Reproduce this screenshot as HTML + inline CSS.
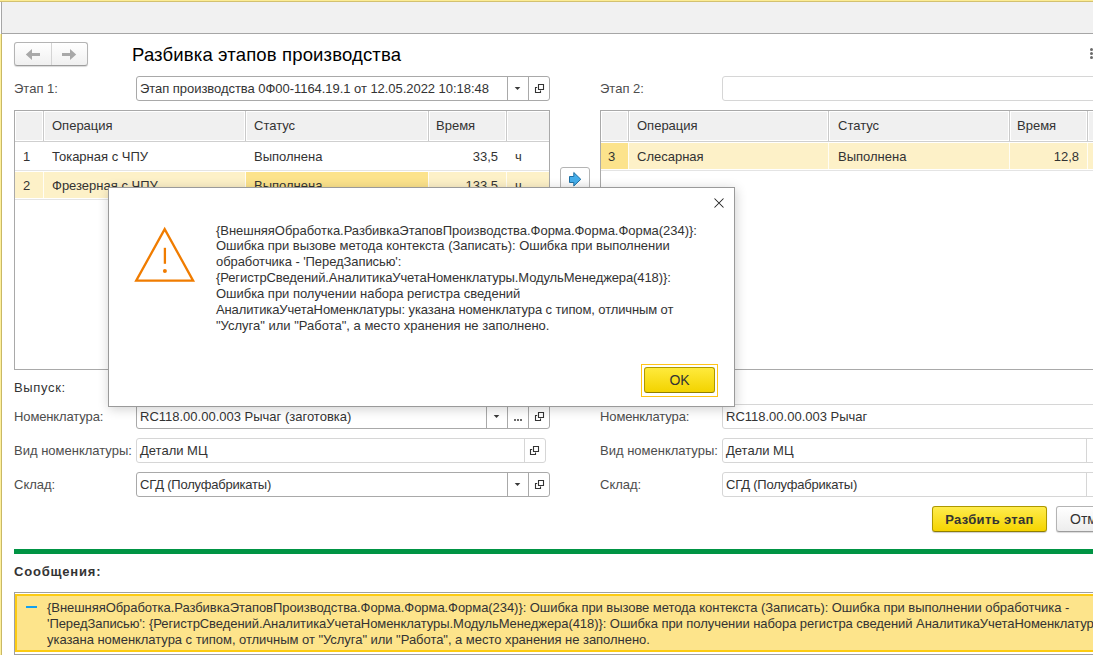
<!DOCTYPE html>
<html><head><meta charset="utf-8">
<style>
*{margin:0;padding:0;box-sizing:border-box}
html,body{width:1093px;height:655px;overflow:hidden;background:#fff}
body{position:relative;font-family:"Liberation Sans",sans-serif;font-size:13px;color:#333}
.a{position:absolute}
.t{position:absolute;white-space:pre;line-height:16px;padding-top:1px}
.lbl{color:#4d4d4d}
.fld{position:absolute;height:25px;border:1px solid #a9a9a9;border-radius:3px;background:#fff}
.fld.ro{border-color:#d6d6d6}
.dv{position:absolute;top:0;bottom:0;width:1px;background:#a9a9a9}
.ro .dv{background:#d6d6d6}
.tbl{position:absolute;border:1px solid #a9a9a9;background:#fff;overflow:hidden}
.hdr{position:absolute;left:0;right:0;top:0;height:30px;background:#f2f2f2;border-bottom:1px solid #d8d8d8}
.hd{position:absolute;top:0;height:30px;width:1px;background:#d8d8d8;border-right:1px solid #fafafa}
</style></head><body>

<!-- top frame -->
<div class="a" style="left:0;top:0;width:1093px;height:1px;background:#fcec94"></div>
<div class="a" style="left:0;top:1px;width:1093px;height:1px;background:#d3c170"></div>
<div class="a" style="left:2px;top:2px;width:1091px;height:31px;background:#f1f1f1"></div>
<div class="a" style="left:1px;top:2px;width:1px;height:32px;background:#a6a6a6"></div>
<div class="a" style="left:1px;top:33px;width:1092px;height:1px;background:#a6a6a6"></div>
<div class="a" style="left:0;top:34px;width:1px;height:621px;background:#fdf09c"></div>
<div class="a" style="left:1px;top:34px;width:1px;height:621px;background:#c9b866"></div>

<!-- nav buttons -->
<div class="a" style="left:14px;top:42px;width:74px;height:24px;border:1px solid #b4b4b4;border-bottom-color:#9c9c9c;border-radius:3px;background:linear-gradient(#fff,#f0f0f0);box-shadow:0 1px 1px rgba(0,0,0,.15)"></div>
<div class="a" style="left:51px;top:43px;width:1px;height:22px;background:#d4d4d4"></div>
<svg class="a" style="left:24px;top:47px" width="20" height="16" viewBox="0 0 20 16"><path d="M1.8 7.5 L8 1.9 V5.9 H16 V9 H8 V13.1 Z" fill="#a8a8a8"/></svg>
<svg class="a" style="left:58px;top:47px" width="20" height="16" viewBox="0 0 20 16"><path d="M18.2 7.5 L12 1.9 V5.9 H4 V9 H12 V13.1 Z" fill="#a8a8a8"/></svg>

<!-- title -->
<div class="t" style="left:132px;top:44px;font-size:18.5px;line-height:22px;color:#000;letter-spacing:0.15px;padding-top:0">Разбивка этапов производства</div>

<!-- more dots -->
<div class="a" style="left:1090px;top:48px;width:3px;height:3px;border-radius:50%;background:#6a6a6a"></div>
<div class="a" style="left:1090px;top:52px;width:3px;height:3px;border-radius:50%;background:#6a6a6a"></div>
<div class="a" style="left:1090px;top:56px;width:3px;height:3px;border-radius:50%;background:#6a6a6a"></div>


<!-- Etap 1 -->
<div class="t lbl" style="left:14px;top:80px">Этап 1:</div>
<div class="fld" style="left:136px;top:76px;width:414px">
  <div class="t" style="left:3px;top:3px;letter-spacing:-0.044px">Этап производства 0Ф00-1164.19.1 от 12.05.2022 10:18:48</div>
  <div class="dv" style="left:370px"></div>
  <div class="dv" style="left:391px"></div>
  <svg class="a" style="left:376px;top:9px" width="10" height="5"><path d="M1.7 0.9 H7.3 L4.5 3.9 Z" fill="#3a3a3a"/></svg>
  <svg class="a" style="left:397px;top:6px" width="12" height="12"><path d="M4.5 1.5 H9.5 V6.5 H4.5 Z M3.2 4.5 H1.5 V9.5 H6.5 V7.6" fill="none" stroke="#333" stroke-width="1.1"/></svg>
</div>

<!-- Etap 2 -->
<div class="t lbl" style="left:600px;top:80px">Этап 2:</div>
<div class="fld ro" style="left:722px;top:76px;width:400px"></div>

<!-- left table -->
<div class="a" style="left:14px;top:110px;width:536px;height:260px;overflow:hidden">
  <div class="a" style="left:0;top:0;width:536px;height:31px;background:#fff"></div>
  <div class="a" style="left:0;top:31px;width:536px;height:1px;background:#cfcfcf"></div>
  <div class="a" style="left:2px;top:2px;width:26px;height:28px;background:#f0f0f0"></div>
  <div class="a" style="left:31px;top:2px;width:199px;height:28px;background:#f0f0f0"></div>
  <div class="a" style="left:233px;top:2px;width:180px;height:28px;background:#f0f0f0"></div>
  <div class="a" style="left:416px;top:2px;width:75px;height:28px;background:#f0f0f0"></div>
  <div class="a" style="left:494px;top:2px;width:41px;height:28px;background:#f0f0f0"></div>
  <div class="a" style="left:29px;top:1px;width:1px;height:30px;background:#cacaca"></div>
  <div class="a" style="left:231px;top:1px;width:1px;height:30px;background:#cacaca"></div>
  <div class="a" style="left:414px;top:1px;width:1px;height:30px;background:#cacaca"></div>
  <div class="a" style="left:492px;top:1px;width:1px;height:30px;background:#cacaca"></div>
  <div class="t" style="left:38px;top:7px">Операция</div>
  <div class="t" style="left:240px;top:7px">Статус</div>
  <div class="t" style="left:422px;top:7px">Время</div>
  <!-- row1 -->
  <div class="a" style="left:0;top:60px;width:536px;height:1px;background:#e4e4e4"></div>
  <div class="t" style="left:9px;top:38px">1</div>
  <div class="t" style="left:38px;top:38px">Токарная с ЧПУ</div>
  <div class="t" style="left:240px;top:38px">Выполнена</div>
  <div class="t" style="right:52px;top:38px">33,5</div>
  <div class="t" style="left:501px;top:38px">ч</div>
  <!-- row2 -->
  <div class="a" style="left:0;top:62px;width:536px;height:26px;background:#fdf1c8"></div>
  <div class="a" style="left:29px;top:62px;width:1px;height:26px;background:#fffdf5"></div>
  <div class="a" style="left:231px;top:62px;width:1px;height:26px;background:#fffdf5"></div>
  <div class="a" style="left:232px;top:62px;width:182px;height:26px;background:#fce38c"></div>
  <div class="a" style="left:414px;top:62px;width:1px;height:26px;background:#fffdf5"></div>
  <div class="a" style="left:492px;top:62px;width:1px;height:26px;background:#fffdf5"></div>
  <div class="a" style="left:0;top:89px;width:536px;height:1px;background:#e4e4e4"></div>
  <div class="t" style="left:9px;top:67px">2</div>
  <div class="t" style="left:38px;top:67px">Фрезерная с ЧПУ</div>
  <div class="t" style="left:240px;top:67px">Выполнена</div>
  <div class="t" style="right:52px;top:67px">133,5</div>
  <div class="t" style="left:501px;top:67px">ч</div>
  <div class="a" style="left:0;top:0;width:536px;height:260px;border:1px solid #a9a9a9"></div>
</div>

<!-- arrow btn -->
<div class="a" style="left:560px;top:167px;width:30px;height:30px;border:1px solid #b4b4b4;border-radius:3px;background:linear-gradient(#fff 40%,#ececec)"></div>
<svg class="a" style="left:566px;top:170px" width="20" height="20" viewBox="0 0 20 20"><path d="M3.5 6.5 H7.8 V2.5 L14.8 9.3 L7.8 16 V12.5 H3.5 Z" fill="#45aeea" stroke="#1f6fa3" stroke-width="1" stroke-linejoin="round"/></svg>

<!-- right table -->
<div class="a" style="left:600px;top:110px;width:500px;height:260px;overflow:hidden">
  <div class="a" style="left:0;top:0;width:500px;height:31px;background:#fff"></div>
  <div class="a" style="left:0;top:31px;width:500px;height:1px;background:#cfcfcf"></div>
  <div class="a" style="left:2px;top:2px;width:25px;height:28px;background:#f0f0f0"></div>
  <div class="a" style="left:30px;top:2px;width:197px;height:28px;background:#f0f0f0"></div>
  <div class="a" style="left:230px;top:2px;width:178px;height:28px;background:#f0f0f0"></div>
  <div class="a" style="left:411px;top:2px;width:75px;height:28px;background:#f0f0f0"></div>
  <div class="a" style="left:489px;top:2px;width:10px;height:28px;background:#f0f0f0"></div>
  <div class="a" style="left:28px;top:1px;width:1px;height:30px;background:#cacaca"></div>
  <div class="a" style="left:228px;top:1px;width:1px;height:30px;background:#cacaca"></div>
  <div class="a" style="left:409px;top:1px;width:1px;height:30px;background:#cacaca"></div>
  <div class="a" style="left:487px;top:1px;width:1px;height:30px;background:#cacaca"></div>
  <div class="t" style="left:37px;top:7px">Операция</div>
  <div class="t" style="left:238px;top:7px">Статус</div>
  <div class="t" style="left:417px;top:7px">Время</div>
  <div class="a" style="left:0;top:33px;width:500px;height:26px;background:#fdf1c8"></div>
  <div class="a" style="left:0;top:33px;width:28px;height:26px;background:#fce38c"></div>
  <div class="a" style="left:28px;top:33px;width:1px;height:26px;background:#fffdf5"></div>
  <div class="a" style="left:228px;top:33px;width:1px;height:26px;background:#fffdf5"></div>
  <div class="a" style="left:409px;top:33px;width:1px;height:26px;background:#fffdf5"></div>
  <div class="a" style="left:487px;top:33px;width:1px;height:26px;background:#fffdf5"></div>
  <div class="a" style="left:0;top:60px;width:500px;height:1px;background:#e4e4e4"></div>
  <div class="t" style="left:8px;top:38px">3</div>
  <div class="t" style="left:37px;top:38px">Слесарная</div>
  <div class="t" style="left:238px;top:38px">Выполнена</div>
  <div class="t" style="right:21px;top:38px">12,8</div>
  <div class="a" style="left:0;top:0;width:520px;height:260px;border:1px solid #a9a9a9"></div>
</div>

<!-- bottom fields -->
<div class="t" style="left:14px;top:379px;color:#333;letter-spacing:0.65px">Выпуск:</div>
<div class="t lbl" style="left:14px;top:408px;letter-spacing:-0.12px">Номенклатура:</div>
<div class="fld" style="left:136px;top:404px;width:414px">
  <div class="t" style="left:3px;top:3px">RC118.00.00.003 Рычаг (заготовка)</div>
  <div class="dv" style="left:349px"></div>
  <div class="dv" style="left:370px"></div>
  <div class="dv" style="left:391px"></div>
  <svg class="a" style="left:355px;top:9px" width="10" height="5"><path d="M1.7 0.9 H7.3 L4.5 3.9 Z" fill="#3a3a3a"/></svg>
  <div class="a" style="left:377px;top:14px;width:2px;height:2px;background:#6a6a6a"></div><div class="a" style="left:380px;top:14px;width:2px;height:2px;background:#6a6a6a"></div><div class="a" style="left:383px;top:14px;width:2px;height:2px;background:#6a6a6a"></div>
  <svg class="a" style="left:397px;top:6px" width="12" height="12"><path d="M4.5 1.5 H9.5 V6.5 H4.5 Z M3.2 4.5 H1.5 V9.5 H6.5 V7.6" fill="none" stroke="#333" stroke-width="1.1"/></svg>
</div>
<div class="t lbl" style="left:14px;top:442px">Вид номенклатуры:</div>
<div class="fld ro" style="left:136px;top:438px;width:410px">
  <div class="t" style="left:3px;top:3px">Детали МЦ</div>
  <div class="dv" style="left:387px"></div>
  <svg class="a" style="left:392px;top:6px" width="12" height="12"><path d="M4.5 1.5 H9.5 V6.5 H4.5 Z M3.2 4.5 H1.5 V9.5 H6.5 V7.6" fill="none" stroke="#333" stroke-width="1.1"/></svg>
</div>
<div class="t lbl" style="left:14px;top:476px">Склад:</div>
<div class="fld" style="left:136px;top:472px;width:414px">
  <div class="t" style="left:3px;top:3px;letter-spacing:-0.2px">СГД (Полуфабрикаты)</div>
  <div class="dv" style="left:370px"></div>
  <div class="dv" style="left:391px"></div>
  <svg class="a" style="left:376px;top:9px" width="10" height="5"><path d="M1.7 0.9 H7.3 L4.5 3.9 Z" fill="#3a3a3a"/></svg>
  <svg class="a" style="left:397px;top:6px" width="12" height="12"><path d="M4.5 1.5 H9.5 V6.5 H4.5 Z M3.2 4.5 H1.5 V9.5 H6.5 V7.6" fill="none" stroke="#333" stroke-width="1.1"/></svg>
</div>

<div class="t lbl" style="left:600px;top:408px;letter-spacing:-0.12px">Номенклатура:</div>
<div class="fld ro" style="left:722px;top:404px;width:400px">
  <div class="t" style="left:3px;top:3px">RC118.00.00.003 Рычаг</div>
</div>
<div class="t lbl" style="left:600px;top:442px">Вид номенклатуры:</div>
<div class="fld ro" style="left:722px;top:438px;width:400px">
  <div class="t" style="left:3px;top:3px">Детали МЦ</div>
  <div class="dv" style="left:363px"></div>
</div>
<div class="t lbl" style="left:600px;top:476px">Склад:</div>
<div class="fld ro" style="left:722px;top:472px;width:400px">
  <div class="t" style="left:3px;top:3px;letter-spacing:-0.2px">СГД (Полуфабрикаты)</div>
  <div class="dv" style="left:363px"></div>
</div>

<!-- buttons -->
<div class="a" style="left:932px;top:506px;width:115px;height:26px;border:1px solid #ad9800;border-bottom-color:#8f7e00;border-radius:3px;background:linear-gradient(#ffec4d,#f5d400);box-shadow:0 1px 1px rgba(0,0,0,.2)"></div>
<div class="t" style="left:932px;top:511px;width:115px;text-align:center;font-weight:bold;color:#333;letter-spacing:0.345px">Разбить этап</div>
<div class="a" style="left:1056px;top:506px;width:80px;height:26px;border:1px solid #b4b4b4;border-bottom-color:#9c9c9c;border-radius:3px;background:linear-gradient(#fff,#ededed);box-shadow:0 1px 1px rgba(0,0,0,.15)"></div>
<div class="t" style="left:1070px;top:510px;color:#333;font-size:14px">Отмена</div>

<!-- messages -->
<div class="a" style="left:14px;top:549px;width:1079px;height:5px;background:#009444"></div>
<div class="t" style="left:14px;top:563px;font-weight:bold;color:#333;letter-spacing:0.8px">Сообщения:</div>
<div class="a" style="left:14px;top:592px;width:1100px;height:63px;border:1px solid #a0a0a0;background:#fff">
  <div class="a" style="left:0;top:1px;right:0;height:58px;border:2px solid #fccb12;background:#fde48b"></div>
</div>
<div class="a" style="left:26px;top:606px;width:11px;height:2px;background:#12a0ef"></div>
<div class="t" style="left:47px;top:599px;color:#333;letter-spacing:-0.058px">{ВнешняяОбработка.РазбивкаЭтаповПроизводства.Форма.Форма.Форма(234)}: Ошибка при вызове метода контекста (Записать): Ошибка при выполнении обработчика -</div>
<div class="t" style="left:47px;top:615px;color:#333;letter-spacing:-0.062px">'ПередЗаписью': {РегистрСведений.АналитикаУчетаНоменклатуры.МодульМенеджера(418)}: Ошибка при получении набора регистра сведений АналитикаУчетаНоменклатуры: указана номенклатура с типом, отличным от "Услуга" или "Работа", а место хранения не заполнено.</div>
<div class="t" style="left:47px;top:631px;color:#333;letter-spacing:-0.038px">указана номенклатура с типом, отличным от "Услуга" или "Работа", а место хранения не заполнено.</div>

<!-- dialog -->
<div class="a" style="left:108px;top:187px;width:627px;height:220px;border:1px solid #9a9a9a;background:#fff;box-shadow:1px 2px 11px rgba(0,0,0,.19)">
</div>
<svg class="a" style="left:713px;top:197px" width="12" height="12" viewBox="0 0 12 12"><path d="M1.5 1.5 L10.5 10.5 M10.5 1.5 L1.5 10.5" stroke="#222" stroke-width="1.05"/></svg>
<svg class="a" style="left:130px;top:222px" width="70" height="64" viewBox="0 0 70 64"><path d="M34.7 7.1 L6.2 58.65 H63.1 Z" fill="none" stroke="#f07c00" stroke-width="2.3" stroke-linejoin="miter"/><path d="M34.9 25.8 V41.8" stroke="#f07c00" stroke-width="2.3"/><circle cx="34.9" cy="48.9" r="2" fill="#f07c00"/></svg>
<div class="t" style="left:216px;top:222px;color:#333;letter-spacing:-0.035px">{ВнешняяОбработка.РазбивкаЭтаповПроизводства.Форма.Форма.Форма(234)}:</div>
<div class="t" style="left:216px;top:237px;color:#333;letter-spacing:-0.033px">Ошибка при вызове метода контекста (Записать): Ошибка при выполнении</div>
<div class="t" style="left:216px;top:253px;color:#333;letter-spacing:-0.079px">обработчика - 'ПередЗаписью':</div>
<div class="t" style="left:216px;top:269px;color:#333;letter-spacing:-0.102px">{РегистрСведений.АналитикаУчетаНоменклатуры.МодульМенеджера(418)}:</div>
<div class="t" style="left:216px;top:285px;color:#333;letter-spacing:-0.027px">Ошибка при получении набора регистра сведений</div>
<div class="t" style="left:216px;top:301px;color:#333;letter-spacing:-0.115px">АналитикаУчетаНоменклатуры: указана номенклатура с типом, отличным от</div>
<div class="t" style="left:216px;top:317px;color:#333;letter-spacing:0.0px">"Услуга" или "Работа", а место хранения не заполнено.</div>
<div class="a" style="left:641px;top:364px;width:77px;height:33px;border:1px solid #ffc416"></div>
<div class="a" style="left:644px;top:367px;width:71px;height:26px;border:1px solid #ad9800;border-bottom-color:#8f7e00;border-radius:3px;background:linear-gradient(#ffea3c,#f3d300)"></div>
<div class="t" style="left:644px;top:372px;width:71px;text-align:center;font-size:14px;color:#333;padding-top:0">OK</div>
</body></html>
